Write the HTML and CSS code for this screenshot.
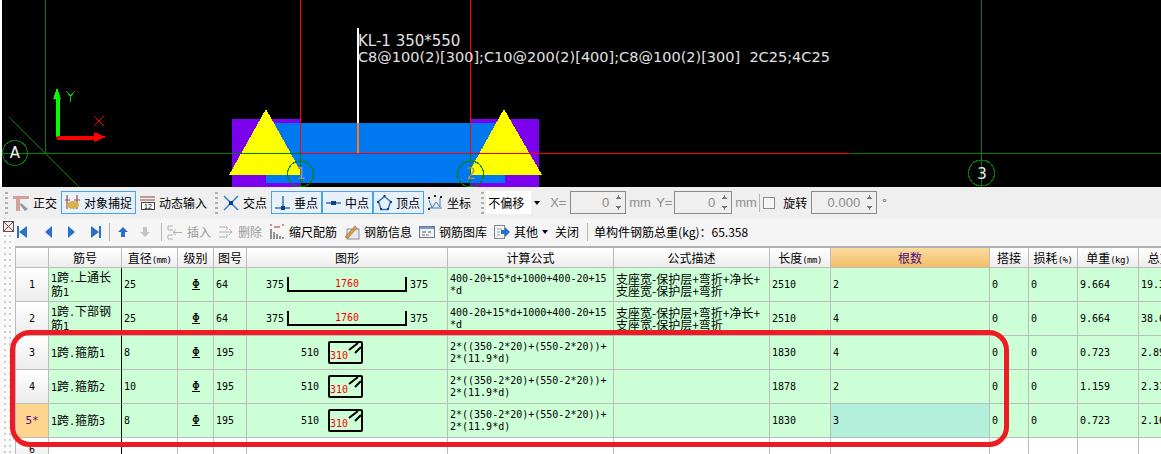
FILE: index.html
```html
<!DOCTYPE html>
<html lang="zh">
<head>
<meta charset="utf-8">
<title>钢筋编辑</title>
<link rel="stylesheet" href="styles.css">
</head>
<body>
<section class="canvas">
  <svg class="drawing" width="1159" height="187" viewBox="2 0 1159 187">
    <rect x="232" y="119" width="68" height="68" fill="#7b00ee"/>
    <rect x="470" y="119" width="69" height="68" fill="#7b00ee"/>
    <rect x="266" y="123" width="239" height="60" fill="#0078f0"/>
    <polygon points="266,109 300,170 300,175 229,175" fill="#ffff00"/>
    <polygon points="504,109 542,175 470,175 470,170" fill="#ffff00"/>
    <g stroke="#008000" fill="none" stroke-width="1">
      <line x1="2" y1="153.5" x2="300" y2="153.5"/>
      <line x1="850" y1="153.5" x2="1161" y2="153.5"/>
      <line x1="45.5" y1="0" x2="45.5" y2="153"/>
      <line x1="9" y1="117" x2="79" y2="187"/>
      <line x1="300.5" y1="153" x2="300.5" y2="187"/>
      <line x1="470.5" y1="153" x2="470.5" y2="187"/>
      <line x1="981.5" y1="0" x2="981.5" y2="187"/>
      <circle cx="15" cy="153" r="12.5"/>
      <circle cx="300.5" cy="174" r="13"/>
      <circle cx="470.5" cy="174" r="13"/>
      <circle cx="981.5" cy="173" r="13"/>
    </g>
    <g stroke="#ff0000" stroke-width="1">
      <line x1="300" y1="153.5" x2="850" y2="153.5"/>
      <line x1="300.5" y1="0" x2="300.5" y2="153"/>
      <line x1="470.5" y1="0" x2="470.5" y2="153"/>
      <line x1="94" y1="116" x2="104" y2="126"/>
      <line x1="104" y1="116" x2="94" y2="126"/>
    </g>
    <rect x="357" y="28" width="2" height="95" fill="#ffffff"/>
    <rect x="357" y="123" width="2" height="30" fill="#f08020"/>
    <rect x="55.500" y="98" width="4" height="39" fill="#00ff00"/>
    <polygon points="57,88 61,99 53,99" fill="#00ff00"/>
    <rect x="57" y="135.500" width="39" height="4" fill="#ff0000"/>
    <polygon points="106,137 94,132 94,142" fill="#ff0000"/>
    <path d="M66 91l4.500 5 4.500-5M70.500 96v6" stroke="#00d000" fill="none"/>
    <text class="cad" x="358" y="46">KL-1 350*550</text>
    <text class="cad long" x="358" y="62">C8@100(2)[300];C10@200(2)[400];C8@100(2)[300]  2C25;4C25</text>
    <text class="cad axis-white" x="15" y="158" text-anchor="middle">A</text>
    <text class="cad axis-orange" x="301" y="179" text-anchor="middle">1</text>
    <text class="cad axis-orange" x="471" y="179" text-anchor="middle">2</text>
    <text class="cad axis-white" x="982" y="179" text-anchor="middle">3</text>
  </svg>
</section>

<section class="snapbar">
  <span class="grip"></span>
  <div class="tool">
    <svg width="16" height="16" viewBox="0 0 16 16"><path d="M0 1h16v3H0zM3 1h4v15H3z" fill="#d8a09c"/><path d="M8 8l7 6-3 2-5-6z" fill="#8c98a4"/></svg>
    <span>正交</span>
  </div>
  <div class="tool on">
    <svg width="15" height="16" viewBox="0 0 15 16"><path d="M2 0v14M12 0v14" stroke="#7a3a2a" fill="none"/><path d="M0 5h5M9 5h6" stroke="#c04030"/><ellipse cx="8" cy="10" rx="6" ry="4" fill="#d8b050"/></svg>
    <span>对象捕捉</span>
  </div>
  <div class="tool">
    <svg width="15" height="16" viewBox="0 0 15 16"><path d="M0 2h15M0 5h15" stroke="#8a4a40" fill="none"/><rect x="1.500" y="7.500" width="13" height="7" fill="#fff" stroke="#444"/><text class="mini" x="4" y="14">12</text></svg>
    <span>动态输入</span>
  </div>
  <span class="grip tight"></span>
  <div class="tool">
    <svg width="16" height="16" viewBox="0 0 16 16"><path d="M1 1l14 14M15 1L1 15" stroke="#3a80c8" stroke-width="1.500"/><rect x="6" y="6" width="4" height="4" fill="#0c3f90"/></svg>
    <span>交点</span>
  </div>
  <div class="tool on">
    <svg width="15" height="16" viewBox="0 0 15 16"><path d="M0 13h15M8 1v12" stroke="#3a70b8" stroke-width="1.500"/><rect x="6" y="11" width="4" height="4" fill="#0c3f90"/></svg>
    <span>垂点</span>
  </div>
  <div class="tool on">
    <svg width="15" height="16" viewBox="0 0 15 16"><path d="M0 8h15" stroke="#3a70b8" stroke-width="1.500"/><rect x="5" y="6" width="5" height="4" fill="#0c3f90"/></svg>
    <span>中点</span>
  </div>
  <div class="tool on">
    <svg width="15" height="16" viewBox="0 0 15 16"><path d="M7.500 1.500l6 5-2.500 8H4l-2.500-8z" fill="none" stroke="#3a70b8" stroke-width="1.500"/><path d="M6.500 0h2v2h-2zM0 6h2v2H0zM13 6h2v2h-2zM3 13h2v2H3zM10 13h2v2h-2z" fill="#0c3f90"/></svg>
    <span>顶点</span>
  </div>
  <div class="tool">
    <svg width="15" height="16" viewBox="0 0 15 16"><path d="M1 5l3 8 4-6 4 5M12 12V3M1 13h13" fill="none" stroke="#3a80c8"/><path d="M0 2h2v2H0zM6 0h2v2H6zM12 1h2v2h-2zM0 13h2v2H0z" fill="#223"/></svg>
    <span>坐标</span>
  </div>
  <span class="grip wide"></span>
  <div class="picker"><span class="picker-value">不偏移</span><i class="caret"></i></div>
  <span class="label x-label">X=</span>
  <div class="spin w56"><span>0</span><i class="arrows"></i></div>
  <span class="label unit">mm</span>
  <span class="label y-label">Y=</span>
  <div class="spin w58"><span>0</span><i class="arrows"></i></div>
  <span class="label unit">mm</span>
  <span class="vline"></span>
  <span class="check"></span>
  <span class="rotate">旋转</span>
  <div class="spin w66"><span>0.000</span><i class="arrows"></i></div>
  <span class="degree">°</span>
</section>

<section class="panel">
  <aside class="strip">
    <svg width="11" height="11" viewBox="0 0 11 11"><rect x=".5" y=".5" width="10" height="10" fill="#eee" stroke="#555"/><path d="M1 1l9 9M10 1l-9 9" stroke="#b04040"/></svg>
  </aside>
  <div class="work">
    <nav class="actions">
      <svg class="ml2" width="10" height="14" viewBox="0 0 10 14"><path d="M0 1h2v12H0zM10 1v12L2 7z" fill="#2a6fc9"/></svg>
      <svg class="ml18" width="7" height="14" viewBox="0 0 7 14"><path d="M7 1v12L0 7z" fill="#2a6fc9"/></svg>
      <svg class="ml16" width="7" height="14" viewBox="0 0 7 14"><path d="M0 1v12l7-6z" fill="#2a6fc9"/></svg>
      <svg class="ml16" width="10" height="14" viewBox="0 0 10 14"><path d="M8 1h2v12H8zM0 1v12l8-6z" fill="#2a6fc9"/></svg>
      <span class="vline ml8"></span>
      <svg class="ml8" width="10" height="10" viewBox="0 0 10 10"><path d="M5 0l5 5H7v5H3V5H0z" fill="#2a6fc9"/></svg>
      <svg class="ml12" width="10" height="10" viewBox="0 0 10 10"><path d="M5 10l5-5H7V0H3v5H0z" fill="#c4c4c4"/></svg>
      <span class="vline ml11"></span>
      <div class="act off ml5">
        <svg width="16" height="16" viewBox="0 0 16 16"><path d="M6 2H1v4h5M6 11H1v4h5" fill="none" stroke="#b0b0b0"/><path d="M6 8.500h9M9 6l-3 2.500L9 11" fill="none" stroke="#b0b0b0"/></svg>
        <span>插入</span>
      </div>
      <div class="act off ml7">
        <svg width="16" height="16" viewBox="0 0 16 16"><path d="M1 3h8M1 13h8M9 3v3M9 10v3M1 8h12M11 5l3 3-3 3" fill="none" stroke="#b0b0b0"/></svg>
        <span>删除</span>
      </div>
      <div class="act ml7">
        <svg width="16" height="16" viewBox="0 0 16 16"><path d="M1 1h2M13 1h2M5 3h6" stroke="#a03020"/><path d="M2 5v10M5 8v7M8 10v5M11 12v3M14 13v2" stroke="#333"/></svg>
        <span>缩尺配筋</span>
      </div>
      <div class="act ml7">
        <svg width="16" height="16" viewBox="0 0 16 16"><rect x="3" y="5" width="12" height="10" fill="#e8e8f0" stroke="#8a8a9a"/><path d="M1 13L11 2l2 2L4 14z" fill="#d8a040" stroke="#7a5020" stroke-width=".5"/></svg>
        <span>钢筋信息</span>
      </div>
      <div class="act ml7">
        <svg width="16" height="16" viewBox="0 0 16 16"><rect x=".5" y="2.500" width="15" height="11" fill="#f0f4fa" stroke="#6a7a90"/><path d="M1 3h14v2H1z" fill="#7a9ac8"/><path d="M3 8h4M9 8h3" stroke="#555"/><path d="M3 11h3" stroke="#d04040"/><path d="M7 11h3" stroke="#40a040"/></svg>
        <span>钢筋图库</span>
      </div>
      <div class="act ml7">
        <svg width="16" height="16" viewBox="0 0 16 16"><rect x=".5" y="1.500" width="10" height="13" fill="#f2f4f8" stroke="#7a8a9a"/><path d="M3 5h5M3 8h3M3 11h3" stroke="#9aa"/><path d="M7 6h4V3l5 5-5 5v-3H7z" fill="#2a70c8"/></svg>
        <span>其他</span>
      </div>
      <i class="caret small"></i>
      <span class="act-text ml7">关闭</span>
      <span class="vline ml8"></span>
      <span class="act-text ml6">单构件钢筋总重(kg)：65.358</span>
    </nav>
    <div class="sheet">
      <table class="grid">
        <colgroup>
          <col class="c-row"><col class="c-name"><col class="c-dia"><col class="c-grade"><col class="c-fig"><col class="c-shape"><col class="c-formula"><col class="c-desc"><col class="c-len"><col class="c-count"><col class="c-lap"><col class="c-loss"><col class="c-unit"><col class="c-total">
        </colgroup>
        <thead>
          <tr>
            <th></th><th>筋号</th><th>直径<small>(mm)</small></th><th>级别</th><th>图号</th><th>图形</th><th>计算公式</th><th>公式描述</th><th>长度<small>(mm)</small></th><th class="sorted">根数</th><th>搭接</th><th>损耗<small>(%)</small></th><th>单重<small>(kg)</small></th><th>总重<small>(kg)</small></th>
          </tr>
        </thead>
        <tbody>
          <tr>
            <th>1</th>
            <td class="name">1<b>跨</b>.<b>上通长</b><br><b>筋</b>1</td><td class="dia">25</td><td class="grade"><span class="rebar">Φ</span></td><td>64</td>
            <td><div class="shape"><span>375</span><div class="bracket">1760</div><span>375</span></div></td>
            <td>400-20+15*d+1000+400-20+15<br>*d</td>
            <td class="desc">支座宽-保护层+弯折+净长+<br>支座宽-保护层+弯折</td>
            <td>2510</td><td>2</td><td>0</td><td>0</td><td>9.664</td><td>19.328</td>
          </tr>
          <tr>
            <th>2</th>
            <td class="name">1<b>跨</b>.<b>下部钢</b><br><b>筋</b>1</td><td class="dia">25</td><td class="grade"><span class="rebar">Φ</span></td><td>64</td>
            <td><div class="shape"><span>375</span><div class="bracket">1760</div><span>375</span></div></td>
            <td>400-20+15*d+1000+400-20+15<br>*d</td>
            <td class="desc">支座宽-保护层+弯折+净长+<br>支座宽-保护层+弯折</td>
            <td>2510</td><td>4</td><td>0</td><td>0</td><td>9.664</td><td>38.656</td>
          </tr>
          <tr>
            <th>3</th>
            <td class="name">1<b>跨</b>.<b>箍筋</b>1</td><td class="dia">8</td><td class="grade"><span class="rebar">Φ</span></td><td>195</td>
            <td><div class="shape stirrup"><span>510</span><div class="hoop"><svg width="35" height="23" viewBox="0 0 35 23"><path d="M21 9l9-7M27 12l6-6" stroke="#000" stroke-width="2"/></svg><em>310</em></div></div></td>
            <td>2*((350-2*20)+(550-2*20))+<br>2*(11.9*d)</td><td></td>
            <td>1830</td><td>4</td><td>0</td><td>0</td><td>0.723</td><td>2.892</td>
          </tr>
          <tr>
            <th>4</th>
            <td class="name">1<b>跨</b>.<b>箍筋</b>2</td><td class="dia">10</td><td class="grade"><span class="rebar">Φ</span></td><td>195</td>
            <td><div class="shape stirrup"><span>510</span><div class="hoop"><svg width="35" height="23" viewBox="0 0 35 23"><path d="M21 9l9-7M27 12l6-6" stroke="#000" stroke-width="2"/></svg><em>310</em></div></div></td>
            <td>2*((350-2*20)+(550-2*20))+<br>2*(11.9*d)</td><td></td>
            <td>1878</td><td>2</td><td>0</td><td>0</td><td>1.159</td><td>2.318</td>
          </tr>
          <tr>
            <th class="current">5*</th>
            <td class="name">1<b>跨</b>.<b>箍筋</b>3</td><td class="dia">8</td><td class="grade"><span class="rebar">Φ</span></td><td>195</td>
            <td><div class="shape stirrup"><span>510</span><div class="hoop"><svg width="35" height="23" viewBox="0 0 35 23"><path d="M21 9l9-7M27 12l6-6" stroke="#000" stroke-width="2"/></svg><em>310</em></div></div></td>
            <td>2*((350-2*20)+(550-2*20))+<br>2*(11.9*d)</td><td></td>
            <td>1830</td><td class="focus">3</td><td>0</td><td>0</td><td>0.723</td><td>2.169</td>
          </tr>
          <tr class="blank">
            <th>6</th>
            <td class="name"></td><td class="dia"></td><td></td><td></td><td></td><td></td><td></td><td></td><td></td><td></td><td></td><td></td><td></td>
          </tr>
        </tbody>
      </table>
    </div>
  </div>
</section>
<div class="ring"></div>
</body>
</html>
```
FILE: styles.css
```css
* { box-sizing: border-box; }
html, body { margin: 0; height: 454px; overflow: hidden; background: #fff; }
body { position: relative; font: 12px/14px "Noto Sans CJK SC", "Liberation Sans", sans-serif; color: #000; }

.canvas { height: 187px; padding-left: 2px; background: #fff; }
.drawing { display: block; background: #000; shape-rendering: crispEdges; }
.cad { font: 15px "DejaVu Sans", sans-serif; fill: #e2e2e2; shape-rendering: auto; }
.cad.long { font-size: 14.5px; white-space: pre; }
.axis-white { fill: #f0f0f0; }
.axis-orange { fill: #b08a70; }

.snapbar { height: 31px; padding-left: 5px; display: flex; align-items: center; background: #efefef; }
.grip { width: 3px; height: 22px; margin-right: 1px; background: repeating-linear-gradient(#b0b0b0 0 2px, transparent 2px 5px); flex: none; }
.grip.tight { margin-left: 4px; }
.grip.wide { margin-left: 6px; margin-right: 2px; }
.tool { height: 23px; padding: 0 3px; border: 1px solid transparent; display: flex; align-items: center; gap: 4px; white-space: nowrap; flex: none; }
.tool svg, .act svg { flex: none; }
.tool.on { border-color: #4aa2ea; background: #e6f1fb; }
.mini { font: 7px "Liberation Sans", sans-serif; fill: #000; }

.picker { width: 60px; height: 23px; display: flex; align-items: center; flex: none; }
.picker-value { width: 46px; height: 23px; padding-left: 2px; line-height: 23px; background: #fff; }
.caret { width: 0; height: 0; margin-left: 3px; margin-right: 6px; border: 3px solid transparent; border-top: 4px solid #000; border-bottom: 0; flex: none; }
.caret.small { margin: 0 0 0 4px; }
.label { color: #8c8c8c; font-family: "Liberation Sans", sans-serif; font-size: 13px; flex: none; }
.x-label { margin-left: 4px; width: 20px; }
.y-label { width: 18px; }
.unit { width: 27px; margin-left: 3px; }
.spin { height: 23px; padding-right: 3px; border: 1px solid #8a8a8a; background: #efefef; display: flex; align-items: center; justify-content: flex-end; gap: 6px; color: #8c8c8c; font: 13px "Liberation Sans", sans-serif; flex: none; }
.w56 { width: 56px; }
.w58 { width: 58px; }
.w66 { width: 66px; }
.arrows { width: 7px; height: 15px; background: conic-gradient(from 150deg at 50% 0, #777 60deg, transparent 0) top / 7px 4px no-repeat, conic-gradient(from -30deg at 50% 100%, #777 60deg, transparent 0) bottom / 7px 4px no-repeat; transform: scaleY(-1); flex: none; }
.vline { width: 1px; height: 18px; background: #b4b4b4; flex: none; }
.unit + .vline { margin-left: -3px; }
.check { width: 12px; height: 12px; margin-left: 3px; border: 1px solid #8a8a8a; background: #f6f6f6; flex: none; }
.rotate { margin-left: 8px; margin-right: 4px; flex: none; }
.degree { margin-left: 5px; color: #555; flex: none; }

.panel { height: 236px; display: flex; overflow: hidden; }
.strip { width: 15px; padding: 3px 0 0 3px; background-color: #fafafa; background-image: linear-gradient(#cfcfcf 0 2px, transparent 2px), linear-gradient(#cfcfcf 0 2px, transparent 2px); background-size: 2px 6px; background-position: 4px 17px, 9px 17px; background-repeat: repeat-y; flex: none; }
.strip svg { display: block; }
.work { flex: 1; min-width: 0; }
.actions { height: 30px; border-bottom: 2px solid #b0b0b0; background: #f5f5f5; display: flex; align-items: center; white-space: nowrap; }
.actions > * { flex: none; }
.act { display: flex; align-items: center; gap: 4px; }
.act.off { color: #9a9a9a; }
.ml2 { margin-left: 2px; }
.ml5 { margin-left: 5px; }
.ml6 { margin-left: 6px; }
.ml7 { margin-left: 7px; }
.ml8 { margin-left: 8px; }
.ml11 { margin-left: 11px; }
.ml12 { margin-left: 12px; }
.ml16 { margin-left: 16px; }
.ml18 { margin-left: 18px; }

.sheet { overflow: hidden; height: 206px; }
.grid { width: 1186px; table-layout: fixed; border-collapse: separate; border-spacing: 0; font: 10px/12px "DejaVu Sans Mono", "Liberation Mono", monospace; }
.c-row { width: 34px; }
.c-name { width: 73px; }
.c-dia { width: 56px; }
.c-grade { width: 36px; }
.c-fig { width: 33px; }
.c-shape { width: 201px; }
.c-formula { width: 166px; }
.c-desc { width: 156px; }
.c-len { width: 61px; }
.c-count { width: 159px; }
.c-lap { width: 39px; }
.c-loss { width: 49px; }
.c-unit { width: 61px; }
.c-total { width: 62px; }

.grid th, .grid td { border-right: 1px solid #bcbcbc; border-bottom: 1px solid #bcbcbc; overflow: hidden; }
.grid tr > :first-child { border-left: 1px solid #bcbcbc; }
.grid thead th { height: 20px; padding: 0; font: 12px/18px "Noto Sans CJK SC", sans-serif; text-align: center; background: linear-gradient(#fff, #ededed); white-space: nowrap; }
.grid small { font: 9px "DejaVu Sans Mono", monospace; letter-spacing: -.5px; }
.grid thead .sorted { background: linear-gradient(#fbdca0, #f4bd66); color: #4b0e7e; }
.grid tbody tr { height: 34px; }
.grid tbody th { height: 34px; padding: 0; font-weight: 400; text-align: center; background: linear-gradient(#fff, #ececec); }
.grid tbody td { height: 34px; padding: 0 1px 0 2px; background: #ccffd6; white-space: nowrap; }
.grid td b { font: 12px/12px "Noto Sans CJK SC", sans-serif; }
.grid tbody .current { background: #ffd48e; color: #4b0e7e; font-size: 11px; }
.grid tbody .focus { background: #b3f0dc; }
.grid tbody .name { border-right-color: #000; }
.grid .grade { text-align: center; }
.rebar { display: inline-block; border-bottom: 1px solid #000; font-size: 13px; line-height: 11px; }
.desc { font: 12px/12px "Noto Sans CJK SC", sans-serif; }

.shape { padding-left: 17px; display: flex; align-items: center; gap: 3px; }
.bracket { width: 120px; height: 15px; border: 2px solid #000; border-top: 0; color: #f00; text-align: center; line-height: 14px; }
.shape.stirrup { padding-left: 52px; gap: 9px; }
.hoop { position: relative; width: 35px; height: 23px; border: 2px solid #000; border-radius: 2px; flex: none; }
.hoop svg { position: absolute; left: -2px; top: -2px; }
.hoop em { position: absolute; left: 0; bottom: 0; color: #f00; font-style: normal; font-size: 10px; line-height: 12px; }

.grid tbody .blank { height: 24px; }
.grid tbody .blank th, .grid tbody .blank td { height: 24px; background: #fff; }
.grid tbody .blank th { background: linear-gradient(#fff, #ececec); }

.ring { position: absolute; left: 10px; top: 330px; width: 999px; height: 117px; border: 5px solid #ed1c24; border-radius: 20px; pointer-events: none; }
```
